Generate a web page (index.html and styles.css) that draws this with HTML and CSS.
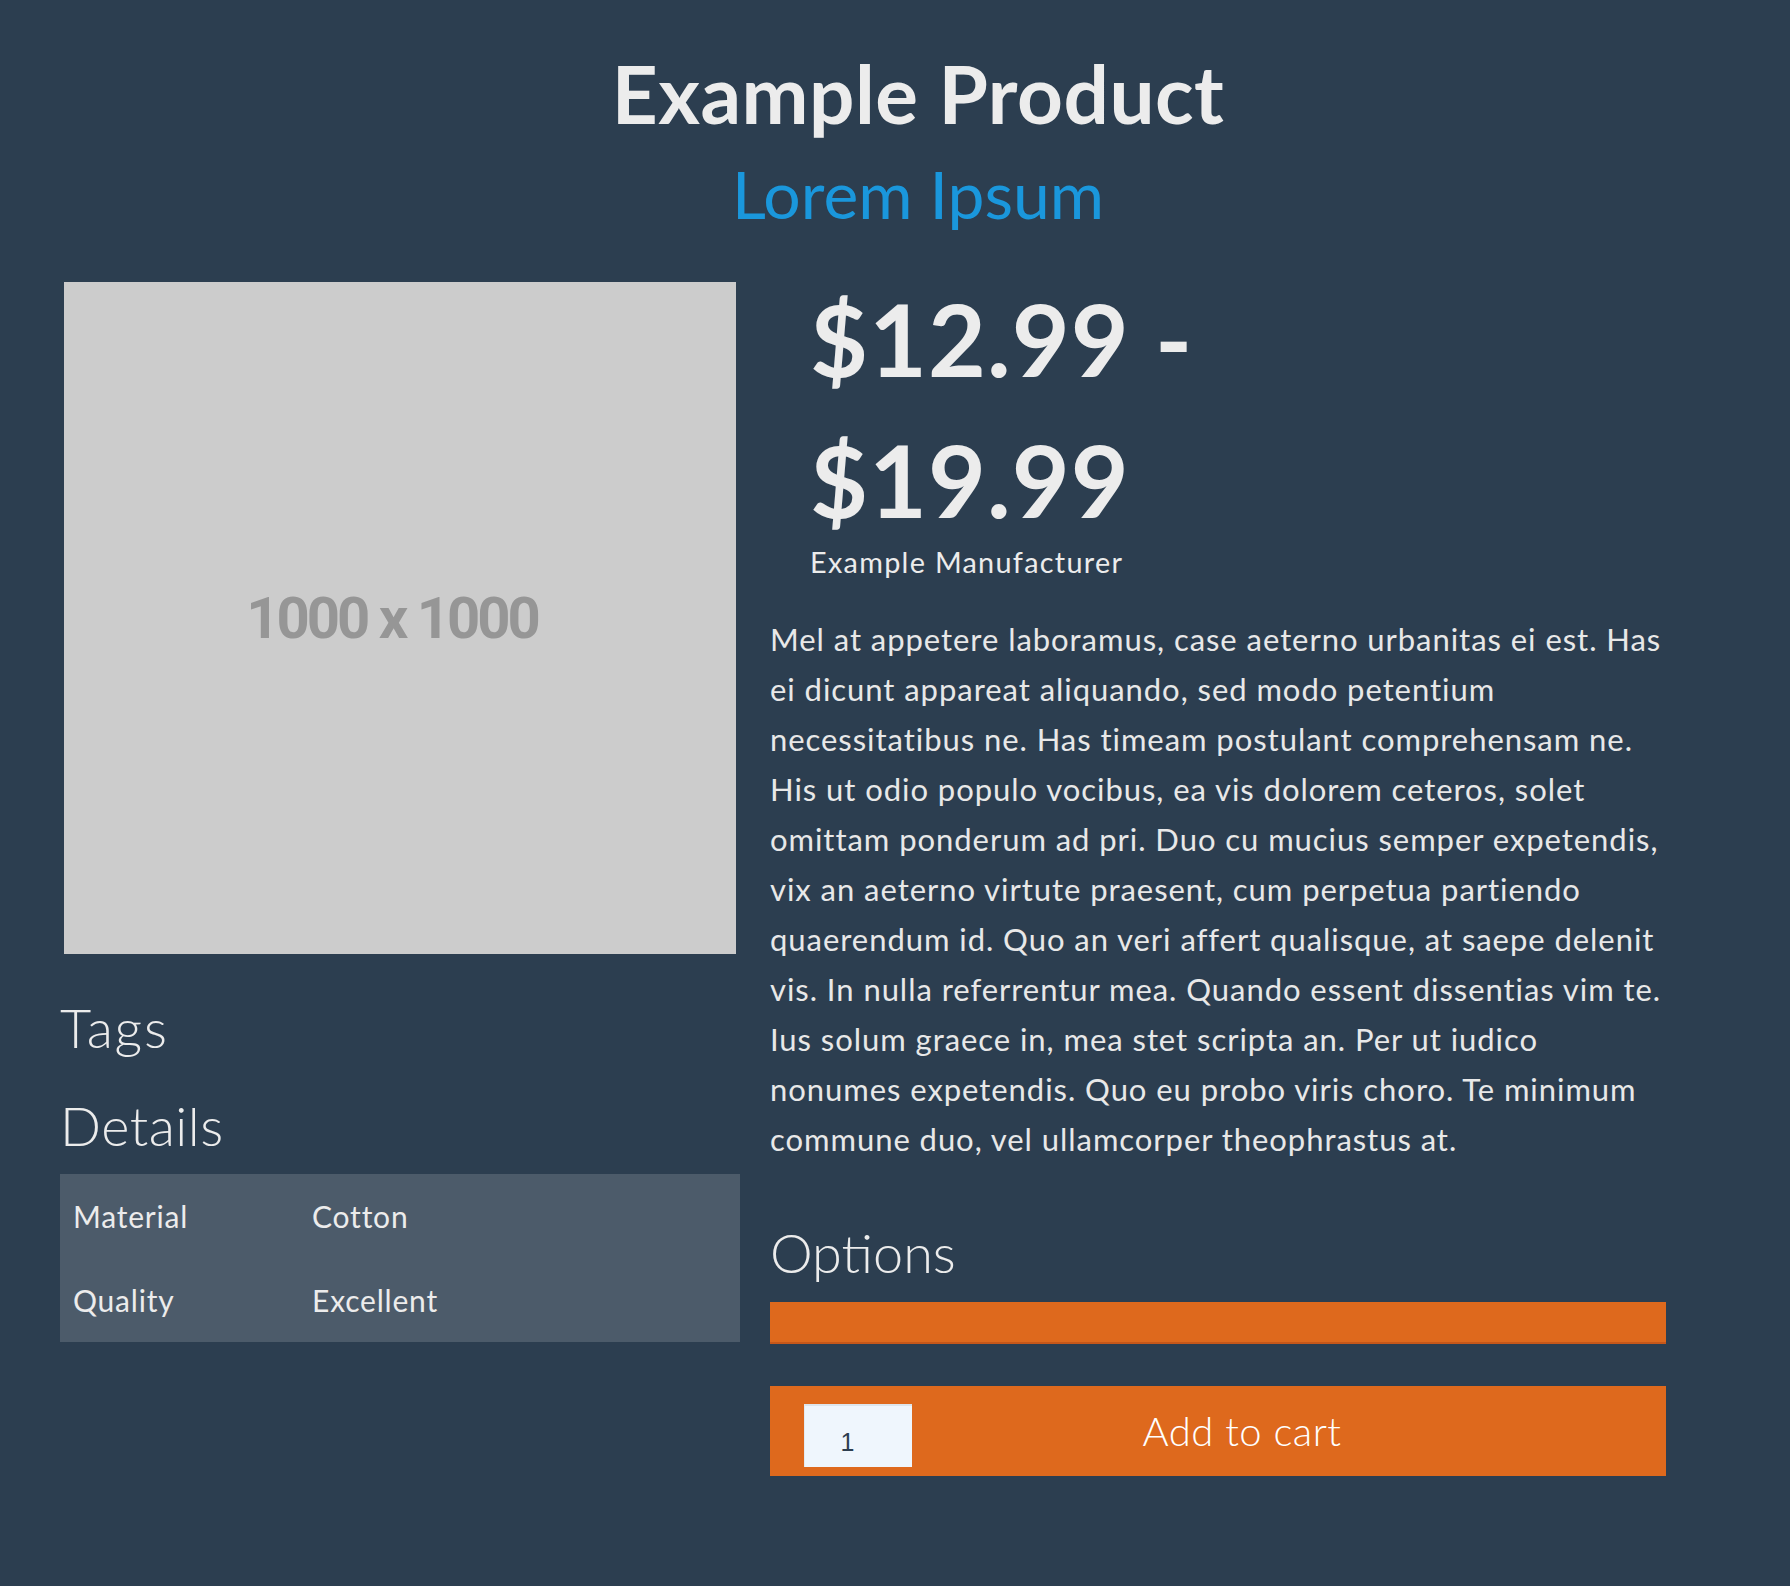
FILE: index.html
```html
<!DOCTYPE html>
<html lang="en">
<head>
<meta charset="utf-8">
<title>Example Product</title>
<link rel="stylesheet" href="styles.css">
</head>
<body>
<header class="page-header">
  <h1 class="product-title">Example Product</h1>
  <h2 class="product-subtitle">Lorem Ipsum</h2>
</header>
<main class="product">
  <section class="col-left">
    <div class="placeholder"><span>1000 x 1000</span></div>
    <h3 class="section-title tags-title">Tags</h3>
    <h3 class="section-title details-title">Details</h3>
    <table class="details">
      <tr><td class="key">Material</td><td>Cotton</td></tr>
      <tr><td class="key">Quality</td><td>Excellent</td></tr>
    </table>
  </section>
  <section class="col-right">
    <div class="price">$12.99 - $19.99</div>
    <div class="manufacturer">Example Manufacturer</div>
    <p class="description">Mel at appetere laboramus, case aeterno urbanitas ei est. Has<br>
ei dicunt appareat aliquando, sed modo petentium<br>
necessitatibus ne. Has timeam postulant comprehensam ne.<br>
His ut odio populo vocibus, ea vis dolorem ceteros, solet<br>
omittam ponderum ad pri. Duo cu mucius semper expetendis,<br>
vix an aeterno virtute praesent, cum perpetua partiendo<br>
quaerendum id. Quo an veri affert qualisque, at saepe delenit<br>
vis. In nulla referrentur mea. Quando essent dissentias vim te.<br>
Ius solum graece in, mea stet scripta an. Per ut iudico<br>
nonumes expetendis. Quo eu probo viris choro. Te minimum<br>
commune duo, vel ullamcorper theophrastus at.</p>
    <h3 class="section-title options-title">Options</h3>
    <div class="option-select"></div>
    <form class="cart">
      <input class="qty" type="text" value="1">
      <button class="add" type="button">Add to cart</button>
    </form>
  </section>
</main>
</body>
</html>
```
FILE: styles.css
```css
html, body {
  margin: 0;
  padding: 0;
}
body {
  background: #2c3e50;
  font-family: Lato, "Open Sans", sans-serif;
  color: #e9e9e9;
  min-height: 1586px;
}
.page-header {
  padding: 45px 0 0 46px;
  text-align: center;
}
.product-title {
  margin: 0;
  font-size: 80px;
  line-height: 96px;
  font-weight: 700;
  letter-spacing: 0.5px;
  color: #ececec;
}
.product-subtitle {
  margin: 13px 0 0;
  font-size: 66px;
  line-height: 79px;
  font-weight: 400;
  color: #1a97dc;
}
.product {
  display: flex;
  gap: 30px;
  padding-left: 60px;
  margin-top: 35px;
}
.col-left {
  width: 680px;
  flex: none;
  padding-top: 14px;
}
.col-right {
  width: 896px;
  flex: none;
}
.placeholder {
  width: 672px;
  height: 672px;
  margin: 0 4px;
  background: #cccccc;
  display: flex;
  align-items: center;
  justify-content: center;
}
.placeholder span {
  font-family: Roboto, sans-serif;
  font-weight: 700;
  font-size: 58px;
  letter-spacing: -3px;
  color: #969696;
  margin-right: 16px;
}
.section-title {
  margin: 0;
  font-size: 54px;
  line-height: 65px;
  font-weight: 300;
  color: #ececec;
}
.tags-title {
  margin-top: 41px;
  letter-spacing: 1.8px;
}
.details-title {
  margin-top: 33px;
  letter-spacing: 0.5px;
}
.details {
  margin-top: 16px;
  width: 680px;
  border-collapse: collapse;
  background: #4c5b6a;
  font-size: 30px;
  line-height: 50px;
  letter-spacing: 0.8px;
  color: #ececec;
}
.details td {
  padding: 17px 13px;
}
.details td.key {
  width: 213px;
}
.price {
  margin-left: 40px;
  width: 440px;
  font-size: 100px;
  line-height: 141px;
  font-weight: 700;
  letter-spacing: 1px;
  color: #ececec;
}
.manufacturer {
  margin: -5px 0 0 40px;
  font-size: 28.8px;
  line-height: 34.5px;
  letter-spacing: 1.3px;
  color: #ececec;
}
.description {
  margin: 34px -40px 0 0;
  font-size: 31px;
  line-height: 50px;
  letter-spacing: 0.95px;
  color: #e8e8e8;
  white-space: nowrap;
}
.options-title {
  margin-top: 56px;
}
.option-select {
  margin-top: 17px;
  height: 40px;
  background: #de691d;
  border-bottom: 2px solid #c6571a;
}
.cart {
  margin: 42px 0 0;
  height: 90px;
  background: #de691d;
  display: grid;
  grid-template-columns: 1fr;
}
.qty {
  grid-area: 1 / 1;
  justify-self: start;
  align-self: start;
  margin: 18px 0 0 34px;
  width: 108px;
  height: 63px;
  box-sizing: border-box;
  border: none;
  border-top: 2px solid #dde5ec;
  border-left: 1px solid #e3eaf0;
  background: #eff6fd;
  font-family: "Liberation Sans", Arial, sans-serif;
  font-size: 25px;
  color: #2c3e50;
  text-align: center;
  padding: 12px 22px 0 0;
}
.add {
  grid-area: 1 / 1;
  justify-self: center;
  align-self: center;
  margin-left: 48px;
  background: none;
  border: none;
  padding: 0;
  font-family: Lato, sans-serif;
  font-weight: 300;
  font-size: 40px;
  line-height: 48px;
  letter-spacing: 0.5px;
  color: #ffffff;
}
```
